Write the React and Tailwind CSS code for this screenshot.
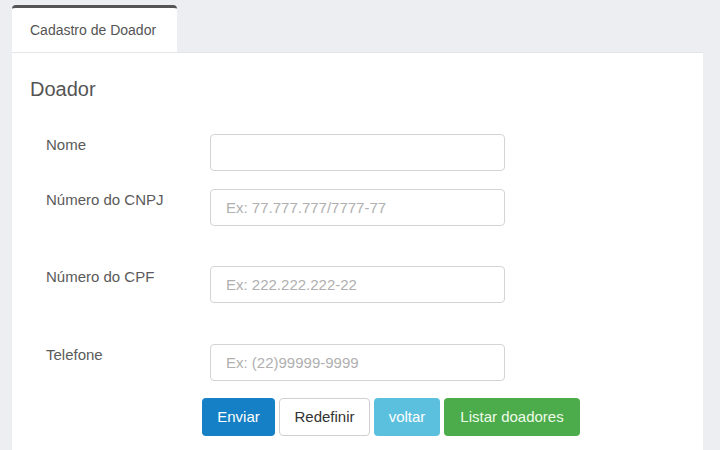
export default function App() {
  const rows = [
    { label: "Nome", placeholder: "", mt: "mt-[34px]" },
    { label: "Número do CNPJ", placeholder: "Ex: 77.777.777/7777-77", mt: "mt-[18px]" },
    { label: "Número do CPF", placeholder: "Ex: 222.222.222-22", mt: "mt-[40px]" },
    { label: "Telefone", placeholder: "Ex: (22)99999-9999", mt: "mt-[41px]" },
  ];

  return (
    <div
      className="min-h-[450px] h-[450px] overflow-hidden bg-[#eceef1] pt-[5px] pl-[12px] pr-[17px] flex flex-col"
      style={{ fontFamily: '"Liberation Sans", Arial, sans-serif' }}
    >
      {/* Tabs */}
      <div className="flex">
        <div className="w-[165px] h-[47px] bg-white border-t-[3px] border-[#555] rounded-t-[4px] flex items-center pl-[18px] text-[14px] text-[#555]">
          Cadastro de Doador
        </div>
      </div>

      {/* Panel */}
      <div className="flex-1 bg-white border-t border-[#e4e5e8] pl-[18px]">
        <h2 className="mt-[25px] text-[20px] leading-[22px] text-[#555]">Doador</h2>

        {rows.map((r) => (
          <div key={r.label} className={`flex items-start ${r.mt}`}>
            <label className="w-[180px] pl-[16px] pt-[2px] text-[15px] leading-[18px] text-[#5a5a5a]">
              {r.label}
            </label>
            <input
              placeholder={r.placeholder}
              className="w-[295px] h-[37px] border border-[#d4d4d4] rounded-[4px] px-[15px] text-[15px] text-[#555] placeholder:text-[#b0b0b0] outline-none"
            />
          </div>
        ))}

        <div className="flex gap-[4px] mt-[17px] ml-[172px]">
          <button className="w-[73px] h-[38px] rounded-[4px] bg-[#1580c5] text-white text-[15px]">
            Enviar
          </button>
          <button className="w-[91px] h-[38px] rounded-[4px] bg-white border border-[#d0d0d0] text-[#333] text-[15px]">
            Redefinir
          </button>
          <button className="w-[66px] h-[38px] rounded-[4px] bg-[#5bc0de] text-white text-[15px]">
            voltar
          </button>
          <button className="w-[136px] h-[38px] rounded-[4px] bg-[#4cab4b] text-[#eefbe9] text-[15px]">
            Listar doadores
          </button>
        </div>
      </div>
    </div>
  );
}
